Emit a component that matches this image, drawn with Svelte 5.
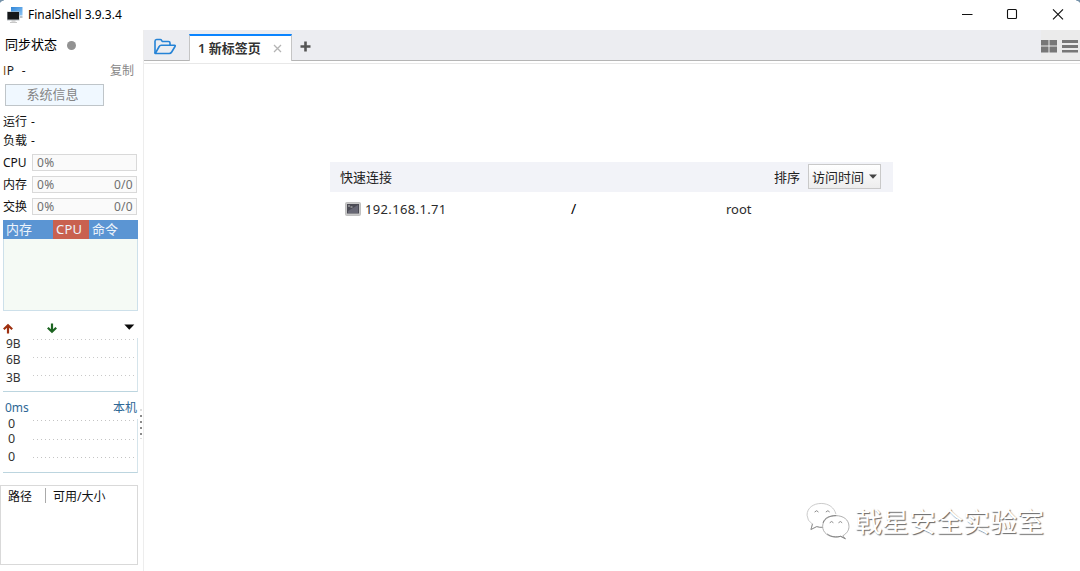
<script>
  const meters = [
    { label: 'CPU', value: '0%', total: '' },
    { label: '内存', value: '0%', total: '0/0' },
    { label: '交换', value: '0%', total: '0/0' }
  ];
</script>

<div class="window">
  <header class="titlebar">
    <svg class="logo" width="18" height="18" viewBox="0 0 18 18">
      <defs>
        <linearGradient id="scr" x1="0" y1="0" x2="1" y2="1">
          <stop offset="0" stop-color="#2f86d8" /><stop offset="1" stop-color="#8cc4f4" />
        </linearGradient>
      </defs>
      <rect x="5" y="1" width="11.500" height="8.500" fill="url(#scr)" />
      <path d="M14 10h2.500v2h-2.500z" fill="#b9c2ca" />
      <rect x="1" y="5.500" width="12.500" height="9" fill="#b7bdc2" />
      <rect x="1.500" y="6" width="11.500" height="7.500" fill="#151719" />
      <path d="M5.500 14.500h4v1h-4zM4 16h7v.8H4z" fill="#b5b5b5" />
    </svg>
    <span class="title">FinalShell 3.9.3.4</span>
    <div class="controls">
      <svg width="46" height="30" viewBox="0 0 46 30"><path d="M18 14.500h10.500" stroke="#111" /></svg>
      <svg width="46" height="30" viewBox="0 0 46 30"><rect x="17.500" y="9.500" width="9" height="9" rx="1" fill="none" stroke="#111" stroke-width="1.100" /></svg>
      <svg width="46" height="30" viewBox="0 0 46 30"><path d="M17 9.300l10 10M27 9.300l-10 10" stroke="#111" stroke-width="1.150" /></svg>
    </div>
    <i class="corner left"></i><i class="corner right"></i>
  </header>

  <div class="body">
    <aside>
      <div class="sync"><span>同步状态</span><i class="dot"></i></div>
      <div class="ip"><span><b>I</b>P&nbsp; -</span><span class="copy">复制</span></div>
      <button class="sysinfo">系统信息</button>
      <div class="stat">运行 -</div>
      <div class="stat">负载 -</div>
      <div class="meters">
        {#each meters as m}
          <div class="meter"><span class="name">{m.label}</span><div class="bar"><span>{m.value}</span><span>{m.total}</span></div></div>
        {/each}
      </div>
      <div class="procs">
        <div class="phead"><span class="c1">内存</span><span class="c2">CPU</span><span class="c3">命令</span></div>
      </div>
      <svg class="net" width="143" height="18" viewBox="0 0 143 18">
        <path d="M8 13.500V5.800M3.800 9.300L8 5.300l4.200 4" fill="none" stroke="#9e3010" stroke-width="2.200" />
        <path d="M52 3.500v8M47.800 7.800l4.200 4 4.200-4" fill="none" stroke="#1c6421" stroke-width="2.200" />
        <path d="M124.300 4.500h10l-5 5.300z" fill="#0a0a0a" />
      </svg>
      <div class="chart speed">
        <div class="labels"><span>9B</span><span>6B</span><span>3B</span></div>
        <svg width="105" height="54" viewBox="0 0 105 54">
          <path d="M0 1.500h103M0 19.500h103M0 37.500h103" stroke="#c9c9c9" stroke-dasharray="1 3" />
        </svg>
      </div>
      <div class="ping"><span>0ms</span><span>本机</span></div>
      <div class="chart delay">
        <div class="labels"><span>0</span><span>0</span><span>0</span></div>
        <svg width="105" height="54" viewBox="0 0 105 54">
          <path d="M0 1.500h103M0 20.500h103M0 38.500h103" stroke="#c4c4c4" stroke-dasharray="1 3" />
        </svg>
      </div>
      <div class="disk"><span>路径</span><i></i><span>可用/大小</span></div>
      <svg class="grip" width="4" height="34" viewBox="0 0 4 34">
        <path d="M1 3h2v2H1zM1 33h2v-1H1z" fill="#ddd" /><path d="M1 9h2v2H1zM1 15h2v2H1zM1 21h2v2H1zM1 27h2v2H1z" fill="#8b8b8b" />
      </svg>
    </aside>

    <main>
      <nav>
        <div class="folder">
          <svg width="24" height="20" viewBox="0 0 24 20" fill="none" stroke="#2583d6" stroke-width="1.600" stroke-linejoin="round">
            <path d="M2 16.500V4.200Q2 2.500 3.600 2.500h3.600q1 0 1.500 1l.5 1h6.300q1.500 0 1.500 1.500v2.300" />
            <path d="M2.200 16.500l4-7q.6-1.200 2-1.200h13.300q1.200 0 .5 1.200l-3.300 5.500q-.9 1.500-2.500 1.500H3.300q-1.500 0-1.100-1z" />
          </svg>
        </div>
        <div class="tab"><span>1 新标签页</span>
          <svg width="9" height="9" viewBox="0 0 9 9"><path d="M1 1l7 7M8 1L1 8" stroke="#b4b4b4" stroke-width="1.300" /></svg>
        </div>
        <svg class="plus" width="11" height="11" viewBox="0 0 11 11"><path d="M5.500 .5v10M.5 5.500h10" stroke="#555" stroke-width="2.600" /></svg>
        <div class="views">
          <svg width="39" height="14" viewBox="0 0 39 14" fill="#777">
            <path d="M0 1h7.500v5.500H0zM8.500 1H16v5.500H8.500zM0 7.500h7.500v6H0zM8.500 7.500H16v6H8.500zM21 1h16v3H21zM21 6h16v3H21zM21 11h16v2.600H21z" />
          </svg>
        </div>
      </nav>
      <section class="content">
        <div class="quick">
          <span>快速连接</span><span class="sort">排序</span>
          <div class="select"><span>访问时间</span><svg width="8" height="5" viewBox="0 0 8 5"><path d="M0 .5h8L4 4.700z" fill="#444" /></svg></div>
        </div>
        <div class="conn">
          <svg width="16" height="14" viewBox="0 0 16 14">
            <rect x=".5" y=".5" width="15" height="13" rx="1" fill="#c8c8c8" stroke="#c0c0c0" />
            <rect x="2" y="2" width="12" height="9.500" fill="#4b4b54" />
            <path d="M3 9l10-6v8H3z" fill="#777785" opacity=".65" />
            <path d="M3 4h2M5.500 5h2" stroke="#ddd" stroke-width=".8" />
          </svg>
          <span class="host">192.168.1.71</span><span class="path">/</span><span class="user">root</span>
        </div>
      </section>
    </main>
  </div>

  <div class="watermark">
    <svg width="45" height="39" viewBox="0 0 46 40" fill="none" stroke-linecap="round">
      <path d="M17 26q-3 .4-6-.8l-6 3 1.500-5.500Q1 19 1 13.500C1 6 7.500 1.500 15.500 1.500S29 6 30.500 12" stroke="#c4c4c4" stroke-width=".9" />
      <path d="M17 26q-3 .4-6-.8l-6 3 1.500-5.500" stroke="#888" stroke-width=".9" />
      <path d="M38 34.500C42 32 44 29 44 25c0-7-6-11-13.500-11S17 18.500 17 25s6 11 13.500 11q2.500 0 5-.8l4.500 2.300z" fill="#fff" stroke="#a5a5a5" stroke-width=".9" />
      <path d="M17.500 21c1.500-5 6.500-7 13-7M22 33c4 3 9 3.300 13.500 2.200l4.500 2.300" stroke="#777" stroke-width=".9" />
      <path d="M9 10q2-2.500 3.500 0M20.500 10q2-2.500 3.500 0M24.500 21q1.800-2.300 3.300 0M33.500 21q1.800-2.300 3.300 0" stroke="#888" />
    </svg>
    <span>戟星安全实验室</span>
  </div>
</div>

<style>
  :global(body) { background: #fff; overflow: hidden; }
  .window { position: relative; width: 1080px; height: 571px; display: flex; flex-direction: column; background: #fff; color: #1c1c1c; font: 12px/18px "Noto Sans", "Noto Sans CJK SC", sans-serif; overflow: hidden; }
  .window * { box-sizing: border-box; }
  span { white-space: nowrap; }
  svg { display: block; flex: none; }
  .titlebar { height: 30px; display: flex; align-items: center; padding-left: 6px; flex: none; }
  .logo { margin-top: -1px; }
  .title { margin-left: 4px; font-size: 12px; color: #000; }
  .controls { display: flex; margin-left: auto; margin-right: -2px; }
  .corner { position: absolute; top: 0; width: 7px; height: 4px; }
  .left { left: 0; background: radial-gradient(ellipse at 100% 100%, transparent 70%, #7794ab 72%); }
  .right { right: 0; background: radial-gradient(ellipse at 0 100%, transparent 70%, #7794ab 72%); }
  .body { display: flex; flex: 1; }
  aside { position: relative; width: 143px; flex: none; display: flex; flex-direction: column; }
  .sync { height: 28px; display: flex; align-items: center; padding: 0 0 1px 5px; font-size: 13px; color: #000; }
  .dot { width: 9px; height: 9px; border-radius: 50%; background: #929292; margin: 3px 0 0 10px; }
  .ip { height: 25px; display: flex; align-items: center; justify-content: space-between; padding: 0 9px 0 3px; }
  .ip b { font: 12px "Open Sans", sans-serif; color: #7a4200; }
  .ip span:first-child { letter-spacing: .5px; }
  .copy { color: #888; }
  .sysinfo { margin: 1px 0 6px 5px; width: 99px; height: 22px; padding: 0 4px 3px 0; border: 1px solid #bfc5c9; background: #f0f8ff; color: #858585; font: 13px/18px "Noto Sans CJK SC", sans-serif; }
  .stat { height: 19px; line-height: 19px; padding-left: 3px; color: #111; word-spacing: 1px; }
  .meters { padding-top: 4px; display: flex; flex-direction: column; gap: 5px; }
  .meter { height: 17px; display: flex; align-items: center; padding-left: 3px; }
  .name { width: 29px; color: #111; }
  .bar { width: 105px; height: 17px; border: 1px solid #d9d9d9; background: #fafafa; color: #707070; display: flex; justify-content: space-between; align-items: center; padding: 0 3px 0 4px; letter-spacing: .3px; }
  .procs { margin: 5px 0 0 3px; width: 135px; height: 91px; border: 1px solid #cde0ea; border-top: 0; background: #f5faf5; }
  .phead { margin: 0 -1px; height: 19px; background: #5b95d3; color: #edf4fb; display: flex; line-height: 19px; font-size: 13px; }
  .phead span { padding-left: 3px; }
  .c1 { width: 50px; }
  .c2 { width: 36px; background: #c9614f; letter-spacing: .2px; }
  .net { margin-top: 9px; }
  .chart { display: flex; height: 54px; width: 135px; margin-left: 3px; border-right: 1px solid #d5e4eb; border-bottom: 1px solid #bcd5df; }
  .labels { width: 30px; flex: none; display: flex; flex-direction: column; color: #333; }
  .speed .labels { padding-left: 3px; }
  .speed span { height: 17px; line-height: 17px; }
  .speed span:first-child { margin-top: -3px; height: 16px; }
  .speed span:last-child { margin-top: 1px; }
  .ping { height: 27px; display: flex; justify-content: space-between; align-items: center; padding: 4px 6px 0 5px; color: #2e6795; }
  .delay .labels { padding-left: 5px; }
  .delay span { height: 15px; line-height: 15px; font-size: 12.500px; }
  .delay span:first-child { margin-top: -3px; }
  .delay span:last-child { margin-top: 3px; }
  .disk { margin-top: 12px; width: 138px; height: 80px; border: 1px solid #d9d9d9; display: flex; padding: 2px 0 0 7px; color: #111; }
  .disk i { width: 1px; height: 15px; background: #aaa; margin: 0 7px 0 13px; }
  .grip { position: absolute; left: 139px; top: 376px; }
  main { flex: 1; display: flex; flex-direction: column; border-left: 1px solid #ededed; }
  nav { height: 31px; display: flex; background: #ecedf1; border-bottom: 1px solid #b5b5b5; flex: none; }
  .folder { width: 45px; padding: 7px 0 0 9px; }
  .tab { margin: 4px 0 -1px; width: 103px; height: 27px; background: #fff; border: 1px solid #c5c5c5; border-top: 2px solid #0a84ff; border-bottom: 0; display: flex; align-items: center; padding: 0 9px 0 8px; justify-content: space-between; font-size: 13px; font-weight: 600; color: #333; }
  .tab span { margin-top: -2px; }
  .plus { margin: 11px 0 0 8px; }
  .views { margin-left: auto; width: 39px; background: #ebebeb; padding: 9px 0 0 0; }
  .content { margin-top: 2px; border-top: 1px solid #e8e8e8; padding: 98px 0 0 187px; flex: 1; }
  .quick { width: 563px; height: 30px; margin-left: -1px; background: #f2f3f8; display: flex; align-items: center; padding: 0 12px 1px 10px; font-size: 13px; color: #222; }
  .sort { margin-left: auto; }
  .select { margin-left: 8px; width: 73px; height: 25px; border: 1px solid #c9c9c9; background: linear-gradient(#fff, #ededed); display: flex; align-items: center; justify-content: space-between; padding: 0 3px 0 3px; }
  .conn { height: 34px; display: flex; align-items: center; padding-left: 14px; font-size: 13px; color: #2b2b2b; }
  .host { margin-left: 4px; width: 206px; letter-spacing: .35px; }
  .path { width: 155px; color: #000; font-size: 14px; }
  .watermark { position: absolute; left: 806px; top: 500px; display: flex; align-items: center; height: 42px; font: 27px/42px "Noto Sans CJK SC", sans-serif; color: #fff; }
  .watermark span { margin-left: 4px; text-shadow: 1px 1px 1px #666; }
</style>
